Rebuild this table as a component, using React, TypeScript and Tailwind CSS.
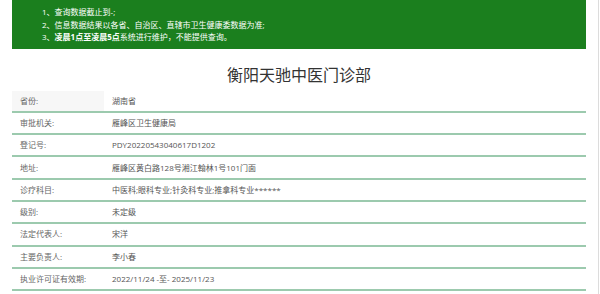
import React from "react";

const rows = [
    { label: "省份:", value: "湖南省" },
    { label: "审批机关:", value: "雁峰区卫生健康局" },
    { label: "登记号:", value: "PDY20220543040617D1202" },
    { label: "地址:", value: "雁峰区黄白路128号湘江翰林1号101门面" },
    { label: "诊疗科目:", value: "中医科;眼科专业;针灸科专业;推拿科专业******" },
    { label: "级别:", value: "未定级" },
    { label: "法定代表人:", value: "宋洋" },
    { label: "主要负责人:", value: "李小春" },
    { label: "执业许可证有效期:", value: "2022/11/24 -至- 2025/11/23" },
];

export default function App() {
    return (
        <div className="w-[600px] h-[294px] bg-white flex overflow-hidden font-['Open_Sans','Noto_Sans_CJK_SC',sans-serif]">
            <div className="w-[574px] ml-[12px] flex flex-col">
                {/* notice box */}
                <div className="bg-[#1b7f1e] text-white text-[8px] leading-[12.5px] pt-[6px] pb-[5px] pl-[30px]">
                    <p>1、查询数据截止到-;</p>
                    <p>2、信息数据结果以各省、自治区、直辖市卫生健康委数据为准;</p>
                    <p>
                        3、<span className="font-bold">凌晨1点至凌晨5点</span>系统进行维护，不能提供查询。
                    </p>
                </div>

                <h1 className="text-center text-[16px] leading-[24px] text-[#333] mt-[14px] mb-[4px]">衡阳天驰中医门诊部</h1>

                <div className="flex flex-col">
                    {rows.map((row, i) => (
                        <div key={i} className="flex h-[22.3px] border-b-2 border-[#9ccaae] text-[8px]">
                            <div className={`w-[92px] pl-[8px] flex items-center text-[#666] ${i === 0 ? "bg-[#f7f7f7]" : ""}`}>
                                {row.label}
                            </div>
                            <div className="pl-[8px] flex items-center text-[#555]">{row.value}</div>
                        </div>
                    ))}
                </div>
            </div>
            <div className="ml-auto mr-[1px] w-px h-full bg-[#dcdcdc]"></div>
        </div>
    );
}
